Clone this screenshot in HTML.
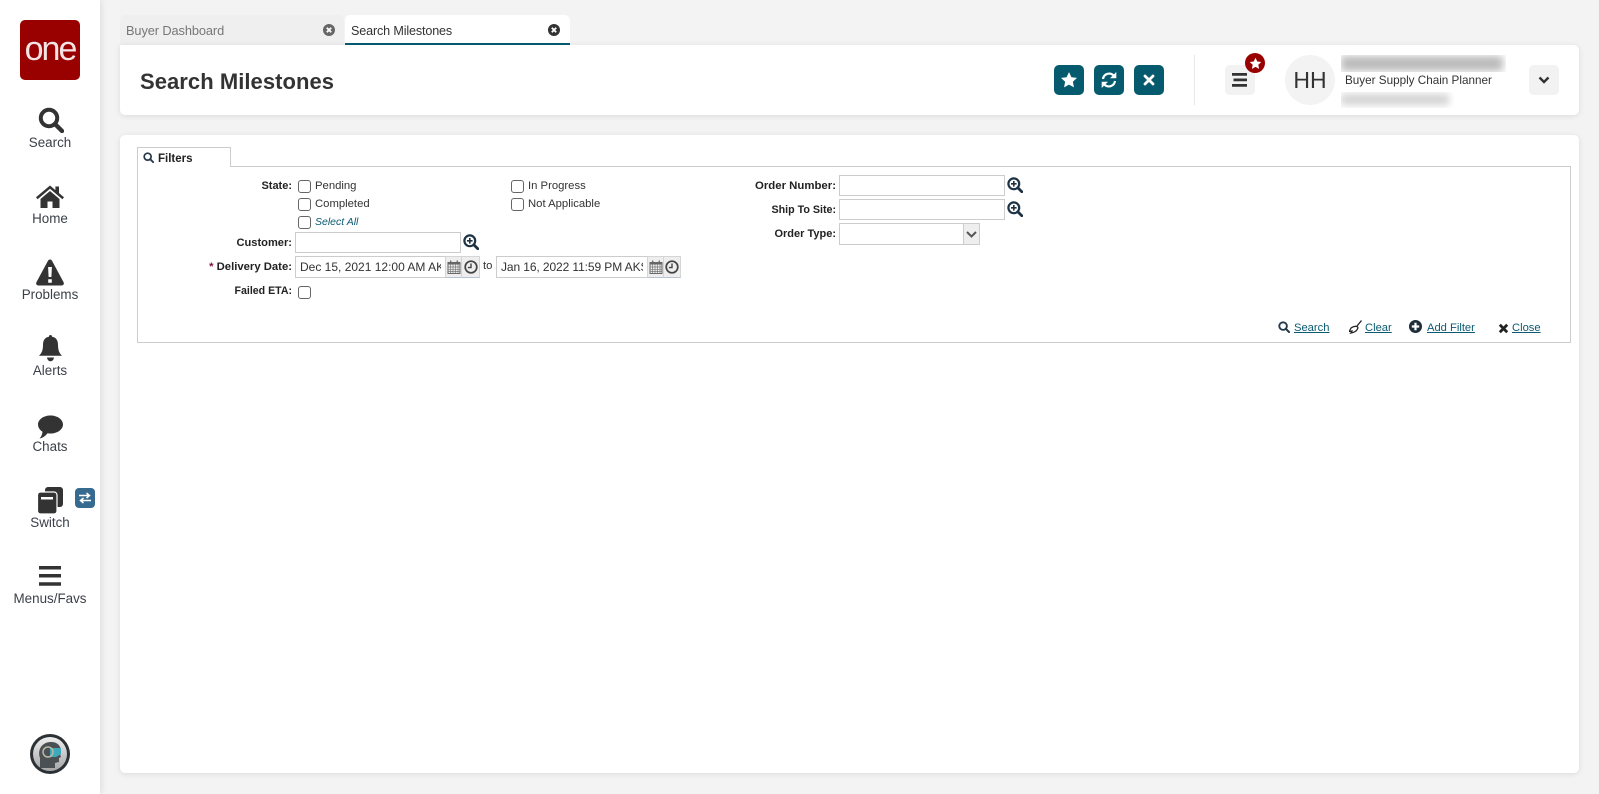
<!DOCTYPE html>
<html><head><meta charset="utf-8"><title>Search Milestones</title>
<style>
*{box-sizing:border-box}
html,body{margin:0;padding:0;width:1599px;height:794px;overflow:hidden;background:#f3f3f3;font-family:"Liberation Sans",Arial,sans-serif;color:#333}
.a{position:absolute}
.t{position:absolute;white-space:nowrap;line-height:16px;height:16px}
.side{left:0;top:0;width:100px;height:794px;background:#fff;box-shadow:2px 0 6px rgba(0,0,0,.08)}
.nl{position:absolute;left:0;width:100px;text-align:center;font-size:13.4px;line-height:18px;color:#3a3f48;margin-top:1px}
.card{background:#fff;border-radius:5px;box-shadow:0 1px 6px rgba(0,0,0,.1)}
.btn{position:absolute;top:65px;width:30px;height:30px;border-radius:5px;background:#055a6e}
.gbtn{position:absolute;top:65px;width:30px;height:30px;border-radius:5px;background:#f2f2f2}
.l{position:absolute;text-align:right;font-size:11.5px;font-weight:bold;line-height:14px;color:#222;white-space:nowrap}
.cb{position:absolute;width:13px;height:13px;border:1px solid #666;border-radius:3px;background:#fff}
.cl{position:absolute;font-size:11.3px;line-height:14px;color:#333;white-space:nowrap}
.in{position:absolute;border:1px solid #ccc;background:#fff;font-size:12px;line-height:20px;color:#333;padding-left:4px;white-space:nowrap}
.in span{display:block;overflow:hidden}
.ib{position:absolute;top:256px;height:22px;background:#eee;border:1px solid #d5d5d5;border-bottom-color:#b9c2d0}
.lk{position:absolute;font-size:11.2px;line-height:14px;color:#0b5a72;text-decoration:underline;white-space:nowrap;top:321px}
svg{position:absolute;display:block}
</style></head><body>
<svg width="0" height="0" style="position:absolute"><defs>
<symbol id="lens" viewBox="0 0 26 26"><circle cx="11" cy="11" r="8.2" fill="none" stroke="currentColor" stroke-width="4"/><path d="M17 17l7 7" stroke="currentColor" stroke-width="4.4" stroke-linecap="round"/></symbol>
<symbol id="zoom" viewBox="0 0 16 16"><circle cx="6.8" cy="6.8" r="5.4" fill="none" stroke="currentColor" stroke-width="2.2"/><path d="M10.8 10.8l4 4" stroke="currentColor" stroke-width="2.8" stroke-linecap="round"/><path d="M6.8 4v5.6M4 6.8h5.6" stroke="currentColor" stroke-width="1.6"/></symbol>
<symbol id="cal" viewBox="0 0 14 14"><path d="M1 2.5h12v11H1z" fill="none" stroke="#666" stroke-width="1"/><path d="M1 2h12v2.500H1z" fill="#666"/><path d="M1 7h12M1 9.300h12M1 11.500h12M3.500 4.500v9M6 4.500v9M8.500 4.500v9M11 4.500v9" stroke="#777" stroke-width=".7"/><path d="M3.700 .5v3M10.300 .5v3" stroke="#666" stroke-width="1.300"/></symbol>
<symbol id="clk" viewBox="0 0 14 14"><circle cx="7" cy="7" r="5.800" fill="none" stroke="#444" stroke-width="1.700"/><path d="M7 3.500V7.600H3.900" fill="none" stroke="#444" stroke-width="1.400"/></symbol>
<symbol id="x" viewBox="0 0 12 12"><circle cx="6" cy="6" r="6" fill="currentColor"/><path d="M3.800 3.800l4.400 4.400M8.200 3.800L3.800 8.200" stroke="#fff" stroke-width="1.800"/></symbol>
<symbol id="star" viewBox="0 0 20 20"><path d="M10 1.200l2.700 5.700 6.200.8-4.600 4.300 1.200 6.200L10 15.200l-5.500 3 1.200-6.200L1.100 7.700l6.200-.8z" fill="#fff"/></symbol>
</defs></svg>

<div class="a side"></div>
<div class="a" style="left:20px;top:20px;width:60px;height:60px;background:#990000;border-radius:5px"></div>
<div class="t" style="left:20px;top:31px;width:60px;height:36px;line-height:36px;text-align:center;color:#f4e4e4;font-size:34px;letter-spacing:-2px">one</div>

<svg style="left:38px;top:107px;color:#333" width="26" height="26"><use href="#lens"/></svg>
<div class="nl" style="top:133px">Search</div>
<svg style="left:36px;top:185px" width="28" height="23" viewBox="0 0 28 23"><path d="M14 .5L0 12.300l1.600 1.900L14 3.800l12.400 10.400 1.600-1.900-5-4.200V1.500h-3.600v3.600z" fill="#333"/><path d="M14 6L4.500 14v9h7v-6.500h5V23h7v-9z" fill="#333"/></svg>
<div class="nl" style="top:209px">Home</div>
<svg style="left:36px;top:259px" width="28" height="27" viewBox="0 0 28 27"><path d="M14 .5c1 0 1.600.6 2 1.300l11.600 21.500c.8 1.600-.2 3.200-1.900 3.200H2.300C.6 26.500-.4 24.900.4 23.300L12 1.800c.4-.7 1-1.300 2-1.300z" fill="#333"/><path d="M12.100 8h3.800l-.5 10h-2.800zM12.200 20.300h3.600v3.500h-3.600z" fill="#fff"/></svg>
<div class="nl" style="top:285px">Problems</div>
<svg style="left:39px;top:335px" width="23" height="27" viewBox="0 0 23 27"><path d="M11.500 0c1 0 1.600.7 1.600 1.700 4 .7 5.900 3.600 5.900 8 0 6 1.500 8.500 4 11H0c2.500-2.500 4-5 4-11 0-4.400 1.900-7.300 5.900-8C9.900.7 10.500 0 11.500 0zM8 22.500h7c-.3 2.300-1.800 3.800-3.500 3.800S8.300 24.800 8 22.500z" fill="#333"/></svg>
<div class="nl" style="top:361px">Alerts</div>
<svg style="left:38px;top:415px" width="25" height="24" viewBox="0 0 25 24"><path d="M12.500 .5c6.900 0 12.500 4 12.500 9s-5.600 9-12.500 9c-1 0-2-.1-3-.3-1.700 2.300-4.500 4.700-8 5.300 1.700-1.700 2.800-3.800 3-6.700C1.900 15.200 0 12.500 0 9.500 0 4.500 5.600 .5 12.500 .5z" fill="#333"/></svg>
<div class="nl" style="top:437px">Chats</div>
<svg style="left:38px;top:487px" width="26" height="27" viewBox="0 0 26 27"><rect x="7" y="0" width="18" height="20" rx="3" fill="#333"/><rect x="-.5" y="5" width="19.500" height="22" rx="3" fill="#333" stroke="#fff" stroke-width="1.200"/><path d="M3 10h12v2.500H3z" fill="#fff"/></svg>
<div class="a" style="left:75px;top:488px;width:20px;height:20px;background:#366a8f;border-radius:4px"></div>
<svg style="left:78px;top:492px" width="14" height="12" viewBox="0 0 14 12"><path d="M1 3.500h9.500M8.500 1l3 2.500-3 2.500M13 8.500H3.500M5.500 6l-3 2.500 3 2.500" fill="none" stroke="#fff" stroke-width="1.500"/></svg>
<div class="nl" style="top:513px">Switch</div>
<svg style="left:39px;top:566px" width="22" height="20" viewBox="0 0 22 20"><path d="M0 0h22v3.500H0zM0 8h22v3.500H0zM0 16.300h22v3.500H0z" fill="#333"/></svg>
<div class="nl" style="top:589px">Menus/Favs</div>
<svg style="left:30px;top:734px" width="40" height="40" viewBox="0 0 40 40"><defs><linearGradient id="g" x1="0" y1="0" x2="0" y2="1"><stop offset="0" stop-color="#eee"/><stop offset="1" stop-color="#a5a5a5"/></linearGradient></defs><circle cx="20" cy="20" r="20" fill="#2b3135"/><circle cx="20" cy="20" r="17" fill="url(#g)"/><path d="M10 34V24c-3-8 2-16 11-16 6 0 9 3 10 8l-1 4 1 3-2 1v4l-4 1v5z" fill="#4a5054"/><path d="M20 14h11v6l-5 3h-6z" fill="#3ea9bb"/><circle cx="18" cy="18" r="5" fill="none" stroke="#b9b9a5" stroke-width="1.500"/></svg>

<div class="a" style="left:120px;top:15px;width:224px;height:30px;background:#efefef;border-radius:5px 5px 0 0"></div>
<div class="t" style="left:126px;top:23px;font-size:12.8px;color:#777;letter-spacing:-.1px">Buyer Dashboard</div>
<svg style="left:323px;top:24px;color:#666" width="12" height="12"><use href="#x"/></svg>
<div class="a" style="left:345px;top:15px;width:225px;height:30px;background:#fff;border-radius:5px 5px 0 0;border-bottom:2px solid #055a6e;z-index:2"></div>
<div class="t" style="left:351px;top:23px;font-size:12.6px;color:#333;z-index:3;letter-spacing:-.15px">Search Milestones</div>
<svg style="left:548px;top:24px;color:#333;z-index:3" width="12" height="12"><use href="#x"/></svg>

<div class="a card" style="left:120px;top:45px;width:1459px;height:70px;border-radius:0 5px 5px 5px"></div>
<div class="t" style="left:140px;top:70px;height:24px;line-height:24px;font-size:22px;font-weight:bold;color:#333;letter-spacing:.05px">Search Milestones</div>

<div class="btn" style="left:1054px"></div>
<svg style="left:1060px;top:71px" width="18" height="18"><use href="#star"/></svg>
<div class="btn" style="left:1094px"></div>
<svg style="left:1100px;top:71px" width="18" height="18" viewBox="0 0 18 18"><path d="M3 8a6.200 6.200 0 0 1 10.500-3.600" fill="none" stroke="#fff" stroke-width="2.200"/><path d="M16.300 1v6.300H10z" fill="#fff"/><path d="M15 10a6.200 6.200 0 0 1-10.500 3.600" fill="none" stroke="#fff" stroke-width="2.200"/><path d="M1.700 17v-6.300H8z" fill="#fff"/></svg>
<div class="btn" style="left:1134px"></div>
<svg style="left:1143px;top:74px" width="12" height="12" viewBox="0 0 12 12"><path d="M2 2l8 8M10 2l-8 8" stroke="#fff" stroke-width="2.800" stroke-linecap="round"/></svg>
<div class="a" style="left:1194px;top:55px;width:1px;height:50px;background:#e8e8e8"></div>
<div class="gbtn" style="left:1225px"></div>
<svg style="left:1232px;top:73px" width="16" height="14" viewBox="0 0 16 14"><path d="M0 0h15v2.800H0zM1.500 5.500H15v2.800H1.500zM0 11h15v2.800H0z" fill="#333"/></svg>
<div class="a" style="left:1245px;top:53px;width:20px;height:20px;background:#990000;border-radius:50%"></div>
<svg style="left:1249px;top:56.500px" width="13" height="13"><use href="#star"/></svg>
<div class="a" style="left:1285px;top:55px;width:50px;height:50px;background:#f3f3f3;border-radius:50%"></div>
<div class="t" style="left:1285px;top:67px;width:50px;height:26px;line-height:26px;text-align:center;font-size:23px;color:#333">HH</div>
<div class="a" style="left:1341px;top:55px;width:165px;height:17px;overflow:hidden"><div style="position:absolute;left:0;top:1px;width:162px;height:15px;background:#bbb;filter:blur(4px)"></div></div>
<div class="t" style="left:1345px;top:73px;font-size:11.7px;color:#333">Buyer Supply Chain Planner</div>
<div class="a" style="left:1341px;top:92px;width:113px;height:16px;overflow:hidden"><div style="position:absolute;left:0;top:2px;width:108px;height:11px;background:#d2d2d2;filter:blur(4px)"></div></div>
<div class="gbtn" style="left:1529px"></div>
<svg style="left:1538px;top:76px" width="12" height="8" viewBox="0 0 12 8"><path d="M1.500 1.500L6 6l4.500-4.500" fill="none" stroke="#333" stroke-width="2.400"/></svg>

<div class="a card" style="left:120px;top:135px;width:1459px;height:638px"></div>
<div class="a" style="left:137px;top:166px;width:1434px;height:177px;border:1px solid #ccc"></div>
<div class="a" style="left:137px;top:147px;width:94px;height:20px;border:1px solid #ccc;border-bottom:0;background:#fff"></div>
<svg style="left:143px;top:152px;color:#24384a" width="11" height="11"><use href="#lens"/></svg>
<div class="l" style="left:158px;top:152px">Filters</div>

<div class="l" style="right:1307px;top:179px;font-size:11px">State:</div>
<div class="cb" style="left:298px;top:180px"></div><div class="cl" style="left:315px;top:179px">Pending</div>
<div class="cb" style="left:298px;top:198px"></div><div class="cl" style="left:315px;top:197px">Completed</div>
<div class="cb" style="left:298px;top:216px"></div><div class="cl" style="left:315px;top:215px;font-style:italic;font-size:10.500px;color:#0b5a72">Select All</div>
<div class="cb" style="left:511px;top:180px"></div><div class="cl" style="left:528px;top:179px">In Progress</div>
<div class="cb" style="left:511px;top:198px"></div><div class="cl" style="left:528px;top:197px">Not Applicable</div>

<div class="l" style="right:1307px;top:236px;font-size:11.100px">Customer:</div>
<div class="in" style="left:295px;top:232px;width:166px;height:21px"></div>
<svg style="left:463px;top:234px;color:#1d3344" width="16" height="16"><use href="#zoom"/></svg>

<div class="l" style="right:1307px;top:260px;font-size:11.300px"><span style="color:#7a1040">*</span> Delivery Date:</div>
<div class="in" style="left:295px;top:256px;width:151px;height:22px"><span style="width:141px">Dec 15, 2021 12:00 AM AKST</span></div>
<div class="ib" style="left:445px;width:17px"></div>
<svg style="left:447px;top:260px" width="14" height="14"><use href="#cal"/></svg>
<div class="ib" style="left:461px;width:19px"></div>
<svg style="left:464px;top:260px" width="14" height="14"><use href="#clk"/></svg>
<div class="cl" style="left:483px;top:259px">to</div>
<div class="in" style="left:496px;top:256px;width:152px;height:22px"><span style="width:142px;letter-spacing:-.1px">Jan 16, 2022 11:59 PM AKST</span></div>
<div class="ib" style="left:647px;width:17px"></div>
<svg style="left:649px;top:260px" width="14" height="14"><use href="#cal"/></svg>
<div class="ib" style="left:663px;width:18px"></div>
<svg style="left:665px;top:260px" width="14" height="14"><use href="#clk"/></svg>

<div class="l" style="right:1307px;top:284px;font-size:10.600px">Failed ETA:</div>
<div class="cb" style="left:298px;top:286px"></div>

<div class="l" style="right:763px;top:179px;font-size:11.400px">Order Number:</div>
<div class="in" style="left:839px;top:175px;width:166px;height:21px"></div>
<svg style="left:1007px;top:177px;color:#1d3344" width="16" height="16"><use href="#zoom"/></svg>
<div class="l" style="right:763px;top:203px;font-size:10.700px">Ship To Site:</div>
<div class="in" style="left:839px;top:199px;width:166px;height:21px"></div>
<svg style="left:1007px;top:201px;color:#1d3344" width="16" height="16"><use href="#zoom"/></svg>
<div class="l" style="right:763px;top:227px;font-size:11px">Order Type:</div>
<div class="in" style="left:839px;top:223px;width:141px;height:22px"></div>
<div class="a" style="left:963px;top:223px;width:17px;height:22px;background:#eee;border:1px solid #ccc"></div>
<svg style="left:966px;top:231px" width="11" height="7" viewBox="0 0 11 7"><path d="M1 1l4.500 4.500L10 1" fill="none" stroke="#555" stroke-width="2"/></svg>

<svg style="left:1278px;top:321px;color:#24384a" width="12" height="12"><use href="#lens"/></svg>
<div class="lk" style="left:1294px">Search</div>
<svg style="left:1349px;top:320px" width="13" height="14" viewBox="0 0 13 14"><path d="M12.500 .5L8 6M2 8c2-1.500 4-2 6-1.500 1 .5 1 1.500.5 2.500-1 2-3 3.500-6.500 4 1-1 1-1.500 1-2-1 .5-2 .5-3 .5C1 10.500 1.500 9 2 8z" fill="#fff" stroke="#222" stroke-width="1.300"/></svg>
<div class="lk" style="left:1365px">Clear</div>
<svg style="left:1409px;top:320px" width="13" height="13" viewBox="0 0 13 13"><circle cx="6.500" cy="6.500" r="6.500" fill="#1d2d3a"/><path d="M6.500 2.800v7.400M2.800 6.500h7.400" stroke="#fff" stroke-width="2.200"/></svg>
<div class="lk" style="left:1427px">Add Filter</div>
<svg style="left:1498px;top:323px" width="11" height="11" viewBox="0 0 11 11"><path d="M1.800 1.800l7.400 7.400M9.200 1.800l-7.400 7.400" stroke="#222" stroke-width="2.800"/></svg>
<div class="lk" style="left:1512px">Close</div>
</body></html>
